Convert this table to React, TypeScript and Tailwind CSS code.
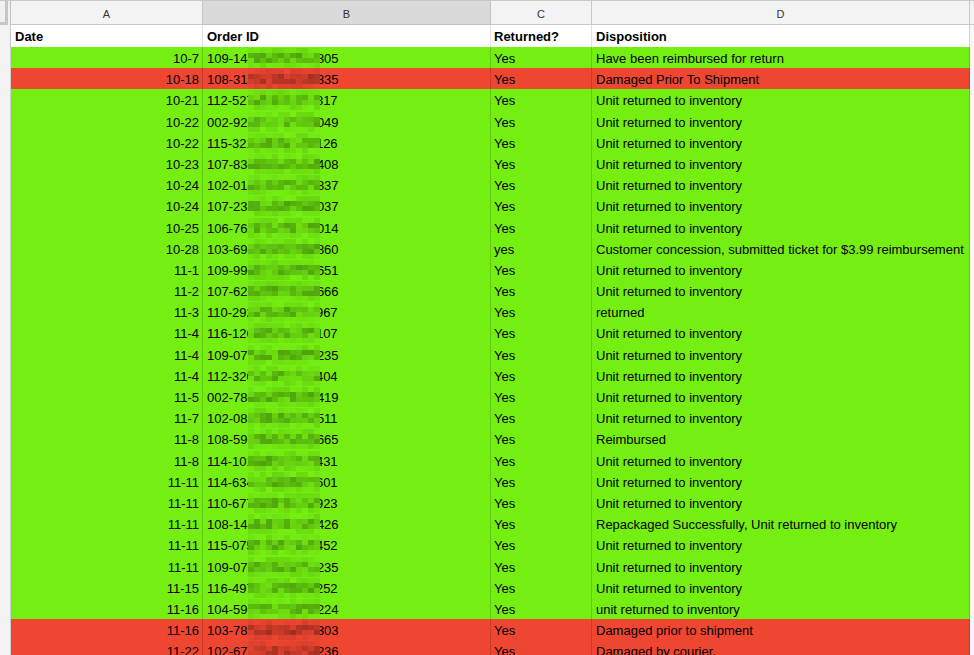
import React from "react";

type Row = {
  date: string;
  pre: string;
  post: string;
  ret: string;
  disp: string;
  red?: boolean;
};

const rows: Row[] = [
  { date: "10-7", pre: "109-14", post: "305", ret: "Yes", disp: "Have been reimbursed for return" },
  { date: "10-18", pre: "108-31", post: "335", ret: "Yes", disp: "Damaged Prior To Shipment", red: true },
  { date: "10-21", pre: "112-527", post: "817", ret: "Yes", disp: "Unit returned to inventory" },
  { date: "10-22", pre: "002-926", post: "049", ret: "Yes", disp: "Unit returned to inventory" },
  { date: "10-22", pre: "115-321", post: "126", ret: "Yes", disp: "Unit returned to inventory" },
  { date: "10-23", pre: "107-830", post: "408", ret: "Yes", disp: "Unit returned to inventory" },
  { date: "10-24", pre: "102-01", post: "837", ret: "Yes", disp: "Unit returned to inventory" },
  { date: "10-24", pre: "107-232", post: "037", ret: "Yes", disp: "Unit returned to inventory" },
  { date: "10-25", pre: "106-76", post: "014", ret: "Yes", disp: "Unit returned to inventory" },
  { date: "10-28", pre: "103-69", post: "860", ret: "yes", disp: "Customer concession, submitted ticket for $3.99 reimbursement" },
  { date: "11-1", pre: "109-997", post: "651", ret: "Yes", disp: "Unit returned to inventory" },
  { date: "11-2", pre: "107-62", post: "666", ret: "Yes", disp: "Unit returned to inventory" },
  { date: "11-3", pre: "110-292", post: "967", ret: "Yes", disp: "returned" },
  { date: "11-4", pre: "116-126", post: "107", ret: "Yes", disp: "Unit returned to inventory" },
  { date: "11-4", pre: "109-07", post: "235", ret: "Yes", disp: "Unit returned to inventory" },
  { date: "11-4", pre: "112-320", post: "404", ret: "Yes", disp: "Unit returned to inventory" },
  { date: "11-5", pre: "002-78", post: "419", ret: "Yes", disp: "Unit returned to inventory" },
  { date: "11-7", pre: "102-08", post: "511", ret: "Yes", disp: "Unit returned to inventory" },
  { date: "11-8", pre: "108-59", post: "665", ret: "Yes", disp: "Reimbursed" },
  { date: "11-8", pre: "114-10", post: "431", ret: "Yes", disp: "Unit returned to inventory" },
  { date: "11-11", pre: "114-63", post: "601", ret: "Yes", disp: "Unit returned to inventory" },
  { date: "11-11", pre: "110-67", post: "923", ret: "Yes", disp: "Unit returned to inventory" },
  { date: "11-11", pre: "108-14", post: "426", ret: "Yes", disp: "Repackaged Successfully, Unit returned to inventory" },
  { date: "11-11", pre: "115-07", post: "452", ret: "Yes", disp: "Unit returned to inventory" },
  { date: "11-11", pre: "109-07", post: "235", ret: "Yes", disp: "Unit returned to inventory" },
  { date: "11-15", pre: "116-497", post: "252", ret: "Yes", disp: "Unit returned to inventory" },
  { date: "11-16", pre: "104-59", post: "224", ret: "Yes", disp: "unit returned to inventory" },
  { date: "11-16", pre: "103-78", post: "303", ret: "Yes", disp: "Damaged prior to shipment", red: true },
  { date: "11-22", pre: "102-67", post: "236", ret: "Yes", disp: "Damaged by courier.", red: true },
];

const GREEN = "#75ef12";
const RED = "#ef4631";

// fill the hidden middle digits so the visible tail lands in the right place
function fullId(r: Row, seed: number) {
  let s = seed * 7919 + 13;
  const digit = () => {
    s = (s * 1103515245 + 12345) % 2147483648;
    return String(s % 10);
  };
  let id = r.pre;
  while (id.length < 11) id += digit();
  id += "-";
  while (id.length < 16) id += digit();
  return id + r.post;
}

// pixelated blur over the middle of the order id
function Mosaic({ seed, color }: { seed: number; color: string }) {
  let s = seed * 104729 + 7;
  const rnd = () => {
    s = (s * 1103515245 + 12345) % 2147483648;
    return (s % 1000) / 1000;
  };
  const cells = [];
  for (let y = 0; y < 4; y++) {
    for (let x = 0; x < 12; x++) {
      const mid = y === 1 || y === 2;
      const o = mid ? 0.06 + rnd() * 0.26 : rnd() * 0.1;
      cells.push(
        <rect key={`${x}-${y}`} x={x * 6} y={y * 5} width={6} height={5} fill="#000" fillOpacity={o} />
      );
    }
  }
  return (
    <svg width={72} height={20} className="absolute left-[45px] top-[1px]">
      <rect width={72} height={20} fill={color} />
      {cells}
    </svg>
  );
}

const cols = "grid grid-cols-[11px_192px_288px_101px_378px_1fr]";

export default function App() {
  return (
    <div
      className="w-[974px] h-[655px] overflow-hidden bg-white text-[13px] text-black"
      style={{ fontFamily: '"Liberation Sans", Arial, sans-serif' }}
    >
      <div className="border-t border-[#c8c8c8]">
        {/* column letters */}
        <div className={`${cols} h-[24px] text-[11px] text-[#333]`}>
          <div className="bg-[#f1f1f1] border-r border-[#c0c0c0]">
            <div className="w-[8px] h-[24px] border-r-[3px] border-b-[3px] border-[#c6c6c6] bg-[#f0f0f0]" />
          </div>
          <div className="bg-[#f3f3f3] border-r border-b border-[#c8c8c8] flex items-center justify-center pt-[3px]">A</div>
          <div className="bg-[#dadada] border-r border-b border-[#c0c0c0] flex items-center justify-center pt-[3px]">B</div>
          <div className="bg-[#f3f3f3] border-r border-b border-[#c8c8c8] flex items-center justify-center pt-[3px]">C</div>
          <div className="bg-[#f3f3f3] border-r border-b border-[#c8c8c8] flex items-center justify-center pt-[3px]">D</div>
          <div className="bg-[#f3f3f3] border-b border-[#c8c8c8]" />
        </div>

        {/* header row */}
        <div className={`${cols} h-[22px] font-bold`}>
          <div className="bg-[#f3f3f3] border-r border-b border-[#c8c8c8]" />
          <div className="border-r border-b border-[#e2e2e2] flex items-center pl-1 pt-[2px]">Date</div>
          <div className="border-r border-b border-[#e2e2e2] flex items-center pl-1 pt-[2px]">Order ID</div>
          <div className="border-r border-b border-[#e2e2e2] flex items-center pl-[3px] pt-[2px]">Returned?</div>
          <div className="border-r border-b border-[#d0d0d0] flex items-center pl-1 pt-[2px]">Disposition</div>
          <div className="bg-[#f8f8f8] border-b border-[#e2e2e2]" />
        </div>

        {rows.map((r, i) => {
          const bg = r.red ? "bg-[#ef4631]" : "bg-[#75ef12]";
          const line = "border-black/15";
          return (
            <div key={i} className={`${cols} h-[21.2px]`}>
              <div className="bg-[#f3f3f3] border-r border-b border-[#cfcfcf]" />
              <div className={`${bg} border-r border-b ${line} flex items-center justify-end pr-[3px] pt-[2px]`}>
                {r.date}
              </div>
              <div className={`${bg} border-r border-b ${line} relative flex items-center pl-1 pt-[2px] whitespace-nowrap`}>
                {fullId(r, i)}
                <Mosaic seed={i + 1} color={r.red ? RED : GREEN} />
              </div>
              <div className={`${bg} border-r border-b ${line} flex items-center pl-[3px] pt-[2px]`}>{r.ret}</div>
              <div className={`${bg} border-r border-b ${line} flex items-center pl-1 pt-[2px] whitespace-nowrap overflow-hidden`}>
                {r.disp}
              </div>
              <div className="bg-[#f8f8f8] border-b border-[#e2e2e2]" />
            </div>
          );
        })}
      </div>
    </div>
  );
}
